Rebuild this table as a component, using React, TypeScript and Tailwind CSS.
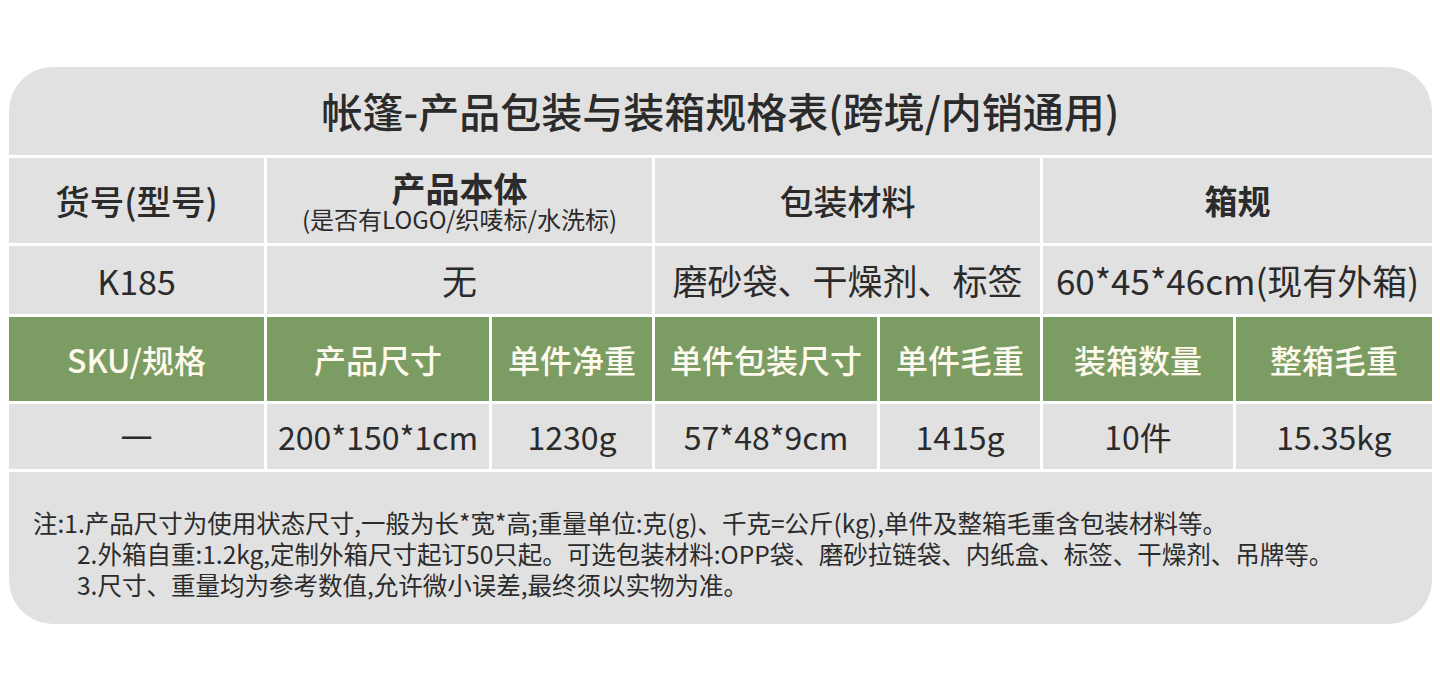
import React from "react";

const cell = "bg-[#e1e1e1] flex items-center justify-center text-[#2b2b2b]";
const greenCell = "bg-[#7b9d63] flex items-center justify-center text-[#fff9ee] text-[32px] font-medium";

const greenHeads = ["SKU/规格", "产品尺寸", "单件净重", "单件包装尺寸", "单件毛重", "装箱数量", "整箱毛重"];
const values = ["一", "200*150*1cm", "1230g", "57*48*9cm", "1415g", "10件", "15.35kg"];

export default function App() {
  return (
    <div
      className="min-h-screen bg-white pt-[67px] pl-[9px]"
      style={{ fontFamily: '"Noto Sans CJK SC", "Noto Sans", sans-serif' }}
    >
      <div className="w-[1423px] rounded-[44px] overflow-hidden bg-white flex flex-col gap-[3px]">
        <div className={`${cell} h-[88px] text-[41px] font-medium`}>
          帐篷-产品包装与装箱规格表(跨境/内销通用)
        </div>

        <div className="grid grid-cols-[255px_222px_160px_222px_160px_190px_196px] gap-[3px]">
          {/* top header */}
          <div className={`${cell} h-[85px] text-[34.5px] font-medium`}>货号(型号)</div>
          <div className={`${cell} col-span-2 flex-col pt-[2px]`}>
            <span className="text-[34px] leading-[34px] font-bold">产品本体</span>
            <span className="text-[24px] leading-[27px]">(是否有LOGO/织唛标/水洗标)</span>
          </div>
          <div className={`${cell} col-span-2 text-[34px] font-medium`}>包装材料</div>
          <div className={`${cell} col-span-2 text-[33px] font-bold`}>箱规</div>

          {/* base row */}
          <div className={`${cell} h-[68px] text-[34px]`}>K185</div>
          <div className={`${cell} col-span-2 text-[35px]`}>无</div>
          <div className={`${cell} col-span-2 text-[35px]`}>磨砂袋、干燥剂、标签</div>
          <div className={`${cell} col-span-2 text-[35px]`}>60*45*46cm(现有外箱)</div>

          {/* green header */}
          {greenHeads.map((h) => (
            <div key={h} className={`${greenCell} h-[84px]`}>
              {h}
            </div>
          ))}

          {/* values */}
          {values.map((v, i) => (
            <div key={i} className={`${cell} h-[65px] text-[32px] pb-[2px]`}>
              {v}
            </div>
          ))}
        </div>

        <div className="bg-[#e1e1e1] h-[152px] pt-[35px] pl-[24px] text-[24.5px] leading-[31px] text-[#2b2b2b]">
          <div>注:1.产品尺寸为使用状态尺寸,一般为长*宽*高;重量单位:克(g)、千克=公斤(kg),单件及整箱毛重含包装材料等。</div>
          <div className="pl-[44px]">2.外箱自重:1.2kg,定制外箱尺寸起订50只起。可选包装材料:OPP袋、磨砂拉链袋、内纸盒、标签、干燥剂、吊牌等。</div>
          <div className="pl-[44px]">3.尺寸、重量均为参考数值,允许微小误差,最终须以实物为准。</div>
        </div>
      </div>
    </div>
  );
}
